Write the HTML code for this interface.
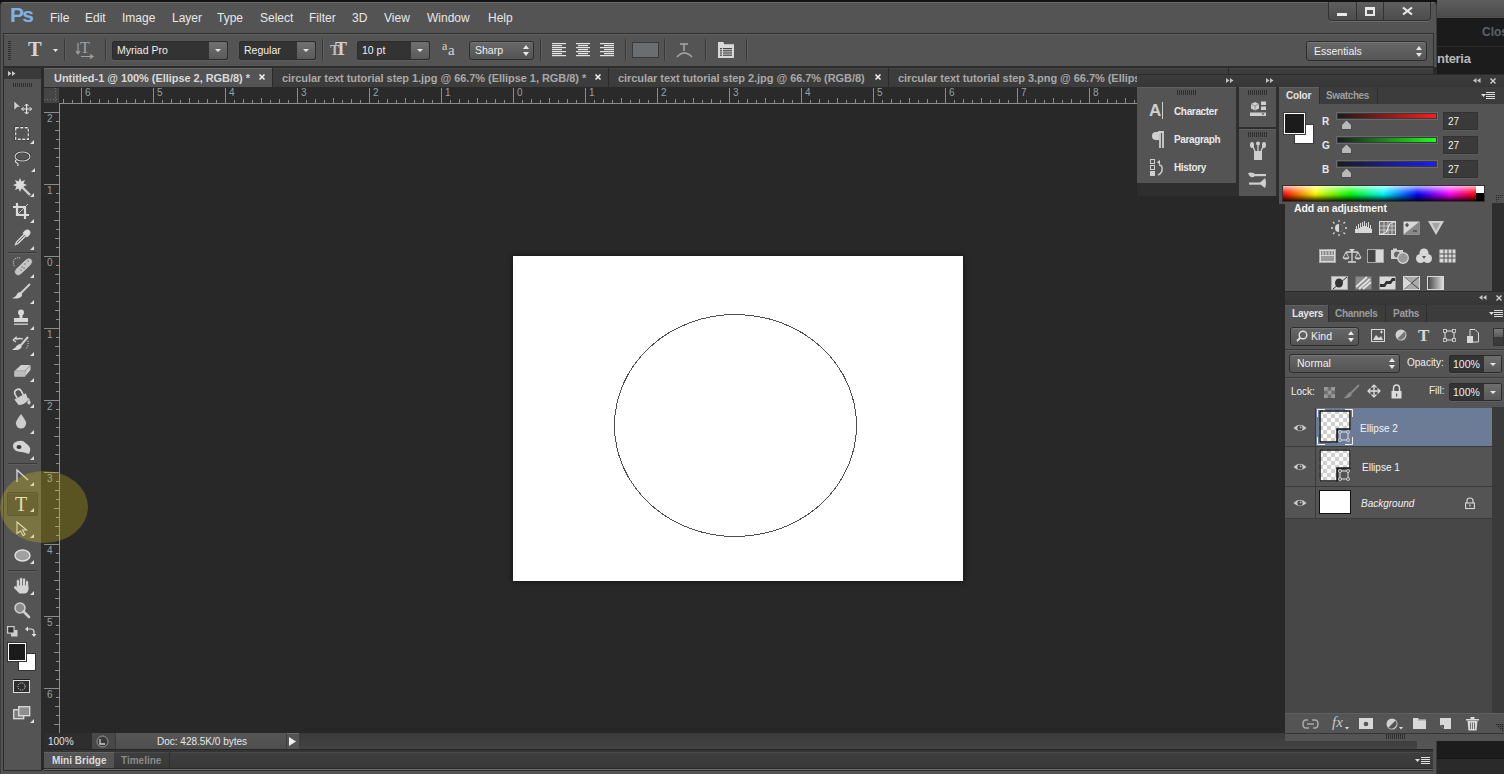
<!DOCTYPE html>
<html><head><meta charset="utf-8">
<style>
*{margin:0;padding:0;box-sizing:border-box}
html,body{width:1504px;height:774px;overflow:hidden;background:#191919;font-family:"Liberation Sans",sans-serif;}
.a{position:absolute}
.t{position:absolute;white-space:nowrap;line-height:1}
svg{overflow:visible}
.menu{font-size:12px;color:#e8e8e8}
.tab{font-size:11px;font-weight:bold;color:#a8a8a8}
.ui{font-size:10px;color:#e4e4e4}
</style></head><body>
<div class="a" style="left:1437px;top:0px;width:67px;height:18px;background:linear-gradient(#5e5e5e,#4a4a4a)"></div>
<div class="a" style="left:1437px;top:18px;width:67px;height:28px;background:#1b1b1b"></div>
<div class="a" style="left:1437px;top:46px;width:67px;height:712px;background:#1c1c1c;border-top:1px solid #2a2a2a"></div>
<div class="a" style="left:1437px;top:758px;width:67px;height:16px;background:#2a2a2a;border-top:1px solid #151515"></div>
<div class="t" style="left:1482px;top:26px;font-size:12px;font-weight:bold;color:#5c636b">Clos</div>
<div class="t" style="left:1437px;top:52px;font-size:13px;font-weight:bold;color:#b8b8b8;letter-spacing:-0.3px">nteria</div>
<div class="a" style="left:0px;top:0px;width:1437px;height:2px;background:#121212"></div>
<div class="a" style="left:0px;top:2px;width:1437px;height:772px;background:#545454;border-radius:4px 4px 0 0;border-top:1px solid #6a6a6a;border-left:1px solid #3c3c3c;border-right:1px solid #3c3c3c"></div>
<div class="t" style="left:10px;top:4px;font-size:21px;font-weight:bold;color:#7eb1e4;letter-spacing:-1.8px">Ps</div>
<div class="t" style="left:50px;top:12px;font-size:12px;color:#e8e8e8">File</div>
<div class="t" style="left:85px;top:12px;font-size:12px;color:#e8e8e8">Edit</div>
<div class="t" style="left:122px;top:12px;font-size:12px;color:#e8e8e8">Image</div>
<div class="t" style="left:172px;top:12px;font-size:12px;color:#e8e8e8">Layer</div>
<div class="t" style="left:217px;top:12px;font-size:12px;color:#e8e8e8">Type</div>
<div class="t" style="left:260px;top:12px;font-size:12px;color:#e8e8e8">Select</div>
<div class="t" style="left:309px;top:12px;font-size:12px;color:#e8e8e8">Filter</div>
<div class="t" style="left:352px;top:12px;font-size:12px;color:#e8e8e8">3D</div>
<div class="t" style="left:384px;top:12px;font-size:12px;color:#e8e8e8">View</div>
<div class="t" style="left:427px;top:12px;font-size:12px;color:#e8e8e8">Window</div>
<div class="t" style="left:488px;top:12px;font-size:12px;color:#e8e8e8">Help</div>
<div class="a" style="left:1328px;top:2px;width:103px;height:19px;background:linear-gradient(#5e5e5e,#4c4c4c);border:1px solid #333;border-top:none;border-radius:0 0 4px 4px;box-shadow:0 1px 0 #6a6a6a"></div>
<div class="a" style="left:1356px;top:2px;width:1px;height:18px;background:#333"></div>
<div class="a" style="left:1383px;top:2px;width:1px;height:18px;background:#333"></div>
<div class="a" style="left:1337px;top:13px;width:10px;height:3px;background:#e8e8e8"></div>
<div class="a" style="left:1365px;top:7px;width:10px;height:9px;border:2px solid #e8e8e8;border-top-width:3px"></div>
<svg class="a" style="left:1402px;top:7px;" width="11" height="8" viewBox="0 0 11 8"><path d="M1 0.5L10 7.5M10 0.5L1 7.5" stroke="#e8e8e8" stroke-width="2.2"/></svg>
<div class="a" style="left:3px;top:33px;width:1431px;height:34px;background:#545454;border:1px solid #2e2e2e;box-shadow:inset 0 1px 0 #626262"></div>
<svg class="a" style="left:8px;top:41px;" width="3" height="20" viewBox="0 0 3 20"><rect x="0" y="0" width="3" height="1" fill="#2e2e2e"/><rect x="0" y="2" width="3" height="1" fill="#2e2e2e"/><rect x="0" y="4" width="3" height="1" fill="#2e2e2e"/><rect x="0" y="6" width="3" height="1" fill="#2e2e2e"/><rect x="0" y="8" width="3" height="1" fill="#2e2e2e"/><rect x="0" y="10" width="3" height="1" fill="#2e2e2e"/><rect x="0" y="12" width="3" height="1" fill="#2e2e2e"/><rect x="0" y="14" width="3" height="1" fill="#2e2e2e"/><rect x="0" y="16" width="3" height="1" fill="#2e2e2e"/><rect x="0" y="18" width="3" height="1" fill="#2e2e2e"/></svg>
<div class="t" style="left:28px;top:39px;font-family:'Liberation Serif',serif;font-size:20.5px;font-weight:bold;color:#d6d6d6">T</div>
<svg class="a" style="left:53px;top:49px;" width="5" height="3" viewBox="0 0 5 3"><path d="M0 0H5L2.5 3Z" fill="#e8e8e8"/></svg>
<div class="a" style="left:64px;top:39px;width:1px;height:22px;background:#3a3a3a;box-shadow:1px 0 0 #5e5e5e"></div>
<div class="t" style="left:80px;top:40px;font-family:'Liberation Serif',serif;font-size:16px;color:#a0a0a0">T</div>
<svg class="a" style="left:76px;top:42px;" width="18" height="17" viewBox="0 0 18 17"><path d="M2 1V11M0 9L2 12L4 9" stroke="#a0a0a0" stroke-width="1.2" fill="none"/><path d="M5 14.5H16M14 12.5L17 14.5L14 16.5" stroke="#a0a0a0" stroke-width="1.2" fill="none"/></svg>
<div class="a" style="left:105px;top:39px;width:1px;height:22px;background:#3a3a3a;box-shadow:1px 0 0 #5e5e5e"></div>
<div class="a" style="left:112px;top:41px;width:116px;height:19px;background:#333;border:1px solid #2c2c2c;border-radius:2px;box-shadow:0 1px 0 #5e5e5e"></div>
<div class="a" style="left:209px;top:42px;width:18px;height:17px;background:linear-gradient(#707070,#5a5a5a);border-radius:0 2px 2px 0"></div>
<svg class="a" style="left:215px;top:49px;" width="6" height="3" viewBox="0 0 6 3"><path d="M0 0H6L3 3Z" fill="#e8e8e8"/></svg>
<div class="t" style="left:117px;top:45px;font-size:10.5px;color:#f0f0f0">Myriad Pro</div>
<div class="a" style="left:239px;top:41px;width:77px;height:19px;background:#333;border:1px solid #2c2c2c;border-radius:2px;box-shadow:0 1px 0 #5e5e5e"></div>
<div class="a" style="left:297px;top:42px;width:18px;height:17px;background:linear-gradient(#707070,#5a5a5a);border-radius:0 2px 2px 0"></div>
<svg class="a" style="left:303px;top:49px;" width="6" height="3" viewBox="0 0 6 3"><path d="M0 0H6L3 3Z" fill="#e8e8e8"/></svg>
<div class="t" style="left:244px;top:45px;font-size:10.5px;color:#f0f0f0">Regular</div>
<div class="a" style="left:322px;top:39px;width:1px;height:22px;background:#3a3a3a;box-shadow:1px 0 0 #5e5e5e"></div>
<div class="t" style="left:330px;top:44px;font-family:'Liberation Serif',serif;font-size:14px;font-weight:bold;color:#bdbdbd">T</div>
<div class="t" style="left:335px;top:40px;font-family:'Liberation Serif',serif;font-size:18px;font-weight:bold;color:#d0d0d0">T</div>
<div class="a" style="left:357px;top:41px;width:73px;height:19px;background:#333;border:1px solid #2c2c2c;border-radius:2px;box-shadow:0 1px 0 #5e5e5e"></div>
<div class="a" style="left:411px;top:42px;width:18px;height:17px;background:linear-gradient(#707070,#5a5a5a);border-radius:0 2px 2px 0"></div>
<svg class="a" style="left:417px;top:49px;" width="6" height="3" viewBox="0 0 6 3"><path d="M0 0H6L3 3Z" fill="#e8e8e8"/></svg>
<div class="t" style="left:362px;top:45px;font-size:10.5px;color:#f0f0f0">10 pt</div>
<div class="t" style="left:442px;top:40px;font-family:'Liberation Serif',serif;font-size:12px;color:#d8d8d8">a</div>
<div class="t" style="left:448px;top:43px;font-family:'Liberation Serif',serif;font-size:15px;color:#d8d8d8">a</div>
<div class="a" style="left:469px;top:41px;width:65px;height:19px;background:linear-gradient(#686868,#545454);border:1px solid #2e2e2e;border-radius:3px;box-shadow:inset 0 1px 0 #757575"></div>
<div class="t" style="left:475px;top:45px;font-size:10.5px;color:#f0f0f0">Sharp</div>
<svg class="a" style="left:523px;top:45px;" width="6" height="11" viewBox="0 0 6 11"><path d="M0 4L3 0L6 4ZM0 7L3 11L6 7Z" fill="#e8e8e8"/></svg>
<div class="a" style="left:540px;top:39px;width:1px;height:22px;background:#3a3a3a;box-shadow:1px 0 0 #5e5e5e"></div>
<svg class="a" style="left:552px;top:43px;" width="14" height="14" viewBox="0 0 14 14"><rect x="0" y="0" width="14" height="1.2" fill="#e4e4e4"/><rect x="0" y="2" width="10" height="1.2" fill="#e4e4e4"/><rect x="0" y="4" width="14" height="1.2" fill="#e4e4e4"/><rect x="0" y="6" width="10" height="1.2" fill="#e4e4e4"/><rect x="0" y="8" width="14" height="1.2" fill="#e4e4e4"/><rect x="0" y="10" width="10" height="1.2" fill="#e4e4e4"/><rect x="0" y="12" width="14" height="1.2" fill="#e4e4e4"/></svg>
<svg class="a" style="left:576px;top:43px;" width="14" height="14" viewBox="0 0 14 14"><rect x="0.0" y="0" width="14" height="1.2" fill="#e4e4e4"/><rect x="2.0" y="2" width="10" height="1.2" fill="#e4e4e4"/><rect x="0.0" y="4" width="14" height="1.2" fill="#e4e4e4"/><rect x="2.0" y="6" width="10" height="1.2" fill="#e4e4e4"/><rect x="0.0" y="8" width="14" height="1.2" fill="#e4e4e4"/><rect x="2.0" y="10" width="10" height="1.2" fill="#e4e4e4"/><rect x="0.0" y="12" width="14" height="1.2" fill="#e4e4e4"/></svg>
<svg class="a" style="left:600px;top:43px;" width="14" height="14" viewBox="0 0 14 14"><rect x="0" y="0" width="14" height="1.2" fill="#e4e4e4"/><rect x="4" y="2" width="10" height="1.2" fill="#e4e4e4"/><rect x="0" y="4" width="14" height="1.2" fill="#e4e4e4"/><rect x="4" y="6" width="10" height="1.2" fill="#e4e4e4"/><rect x="0" y="8" width="14" height="1.2" fill="#e4e4e4"/><rect x="4" y="10" width="10" height="1.2" fill="#e4e4e4"/><rect x="0" y="12" width="14" height="1.2" fill="#e4e4e4"/></svg>
<div class="a" style="left:625px;top:39px;width:1px;height:22px;background:#3a3a3a;box-shadow:1px 0 0 #5e5e5e"></div>
<div class="a" style="left:632px;top:42px;width:27px;height:16px;background:#6a6e70;border:1px solid #3a3a3a"></div>
<div class="a" style="left:664px;top:39px;width:1px;height:22px;background:#3a3a3a;box-shadow:1px 0 0 #5e5e5e"></div>
<svg class="a" style="left:676px;top:42px;" width="17" height="17" viewBox="0 0 17 17"><path d="M4 2H12M8 2V9M1 15Q8 7 16 15" stroke="#a8a8a8" stroke-width="1.5" fill="none"/></svg>
<div class="a" style="left:705px;top:39px;width:1px;height:22px;background:#3a3a3a;box-shadow:1px 0 0 #5e5e5e"></div>
<svg class="a" style="left:718px;top:42px;" width="16" height="16" viewBox="0 0 16 16"><path d="M0 0H5L7 2H16V16H0Z" fill="#d8d8d8"/><rect x="6" y="1" width="10" height="1.2" fill="#555"/><rect x="2" y="6.0" width="2" height="1.2" fill="#444"/><rect x="5" y="6.0" width="9" height="1.2" fill="#444"/><rect x="2" y="8.2" width="2" height="1.2" fill="#444"/><rect x="5" y="8.2" width="9" height="1.2" fill="#444"/><rect x="2" y="10.4" width="2" height="1.2" fill="#444"/><rect x="5" y="10.4" width="9" height="1.2" fill="#444"/><rect x="2" y="12.600000000000001" width="2" height="1.2" fill="#444"/><rect x="5" y="12.600000000000001" width="9" height="1.2" fill="#444"/></svg>
<div class="a" style="left:746px;top:39px;width:1px;height:22px;background:#3a3a3a;box-shadow:1px 0 0 #5e5e5e"></div>
<div class="a" style="left:1306px;top:41px;width:121px;height:20px;background:linear-gradient(#686868,#555);border:1px solid #2e2e2e;border-radius:3px;box-shadow:inset 0 1px 0 #777"></div>
<div class="t" style="left:1314px;top:46px;font-size:10.5px;color:#f0f0f0">Essentials</div>
<svg class="a" style="left:1416px;top:46px;" width="6" height="11" viewBox="0 0 6 11"><path d="M0 4L3 0L6 4ZM0 7L3 11L6 7Z" fill="#e8e8e8"/></svg>
<div class="a" style="left:1px;top:67px;width:1436px;height:707px;background:#545454"></div>
<div class="a" style="left:41px;top:67px;width:1396px;height:703px;background:#2a2a2a"></div>
<div class="a" style="left:3px;top:67px;width:39px;height:704px;background:#545454;border:1px solid #2a2a2a;border-top:none"></div>
<div class="a" style="left:4px;top:67px;width:37px;height:12px;background:#393939;border-top:1px solid #2a2a2a"></div>
<svg class="a" style="left:8px;top:71px;" width="8" height="5" viewBox="0 0 8 5"><path d="M0 0L3.5 2.5L0 5ZM4 0L7.5 2.5L4 5Z" fill="#c8c8c8"/></svg>
<svg class="a" style="left:13px;top:83px;" width="20" height="4" viewBox="0 0 20 4"><rect x="0" y="0" width="1" height="4" fill="#2e2e2e"/><rect x="2" y="0" width="1" height="4" fill="#2e2e2e"/><rect x="4" y="0" width="1" height="4" fill="#2e2e2e"/><rect x="6" y="0" width="1" height="4" fill="#2e2e2e"/><rect x="8" y="0" width="1" height="4" fill="#2e2e2e"/><rect x="10" y="0" width="1" height="4" fill="#2e2e2e"/><rect x="12" y="0" width="1" height="4" fill="#2e2e2e"/><rect x="14" y="0" width="1" height="4" fill="#2e2e2e"/><rect x="16" y="0" width="1" height="4" fill="#2e2e2e"/><rect x="18" y="0" width="1" height="4" fill="#2e2e2e"/></svg>
<div class="a" style="left:44px;top:68px;width:1389px;height:19px;background:#3c3c3c;border-top:1px solid #464646"></div>
<div class="a" style="left:1228px;top:68px;width:1px;height:19px;background:#2a2a2a"></div>
<div class="a" style="left:44px;top:68px;width:228px;height:19px;background:#545454;border-top:1px solid #6a6a6a"></div>
<div class="a" style="left:272px;top:68px;width:1px;height:19px;background:#2a2a2a"></div>
<div class="a" style="left:608px;top:68px;width:1px;height:19px;background:#2a2a2a"></div>
<div class="a" style="left:888px;top:68px;width:1px;height:19px;background:#2a2a2a"></div>
<div class="t" style="left:54px;top:73px;font-size:11px;font-weight:bold;color:#dadada;letter-spacing:-0.05px">Untitled-1 @ 100% (Ellipse 2, RGB/8) *</div>
<div class="t" style="left:282px;top:73px;font-size:11px;font-weight:bold;color:#a8a8a8;letter-spacing:-0.05px">circular text tutorial step 1.jpg @ 66.7% (Ellipse 1, RGB/8) *</div>
<div class="t" style="left:618px;top:73px;font-size:11px;font-weight:bold;color:#a8a8a8;letter-spacing:-0.05px">circular text tutorial step 2.jpg @ 66.7% (RGB/8)</div>
<div class="t" style="left:898px;top:73px;font-size:11px;font-weight:bold;color:#a8a8a8;letter-spacing:-0.05px">circular text tutorial step 3.png @ 66.7% (Ellipse 1, RGB/8)</div>
<svg class="a" style="left:259px;top:74px;" width="6" height="6" viewBox="0 0 6 6"><path d="M0.5 0.5L5.5 5.5M5.5 0.5L0.5 5.5" stroke="#f0f0f0" stroke-width="1.6"/></svg>
<svg class="a" style="left:595px;top:74px;" width="6" height="6" viewBox="0 0 6 6"><path d="M0.5 0.5L5.5 5.5M5.5 0.5L0.5 5.5" stroke="#f0f0f0" stroke-width="1.6"/></svg>
<svg class="a" style="left:875px;top:74px;" width="6" height="6" viewBox="0 0 6 6"><path d="M0.5 0.5L5.5 5.5M5.5 0.5L0.5 5.5" stroke="#f0f0f0" stroke-width="1.6"/></svg>
<div class="a" style="left:44px;top:87px;width:1093px;height:16px;background:#2a2a2a"></div>
<div class="a" style="left:44px;top:103px;width:15px;height:630px;background:#2a2a2a"></div>
<div class="a" style="left:44px;top:88px;width:15px;height:15px;background:#454545"></div>
<svg class="a" style="left:44px;top:88px;" width="15" height="15" viewBox="0 0 15 15"><path d="M11.5 0V15M0 11.5H15" stroke="#6e6e6e" stroke-width="1" stroke-dasharray="1 2"/></svg>
<svg class="a" style="left:59px;top:87px;" width="1078" height="17" viewBox="0 0 1078 17"><path d="M4.5 12.0V16 M13.5 13.0V16 M22.5 1.0V16 M31.5 13.0V16 M40.5 12.0V16 M49.5 13.0V16 M58.5 11.0V16 M67.5 13.0V16 M76.5 12.0V16 M85.5 13.0V16 M94.5 1.0V16 M103.5 13.0V16 M112.5 12.0V16 M121.5 13.0V16 M130.5 11.0V16 M139.5 13.0V16 M148.5 12.0V16 M157.5 13.0V16 M166.5 1.0V16 M175.5 13.0V16 M184.5 12.0V16 M193.5 13.0V16 M202.5 11.0V16 M211.5 13.0V16 M220.5 12.0V16 M229.5 13.0V16 M238.5 1.0V16 M247.5 13.0V16 M256.5 12.0V16 M265.5 13.0V16 M274.5 11.0V16 M283.5 13.0V16 M292.5 12.0V16 M301.5 13.0V16 M310.5 1.0V16 M319.5 13.0V16 M328.5 12.0V16 M337.5 13.0V16 M346.5 11.0V16 M355.5 13.0V16 M364.5 12.0V16 M373.5 13.0V16 M382.5 1.0V16 M391.5 13.0V16 M400.5 12.0V16 M409.5 13.0V16 M418.5 11.0V16 M427.5 13.0V16 M436.5 12.0V16 M445.5 13.0V16 M454.5 1.0V16 M463.5 13.0V16 M472.5 12.0V16 M481.5 13.0V16 M490.5 11.0V16 M499.5 13.0V16 M508.5 12.0V16 M517.5 13.0V16 M526.5 1.0V16 M535.5 13.0V16 M544.5 12.0V16 M553.5 13.0V16 M562.5 11.0V16 M571.5 13.0V16 M580.5 12.0V16 M589.5 13.0V16 M598.5 1.0V16 M607.5 13.0V16 M616.5 12.0V16 M625.5 13.0V16 M634.5 11.0V16 M643.5 13.0V16 M652.5 12.0V16 M661.5 13.0V16 M670.5 1.0V16 M679.5 13.0V16 M688.5 12.0V16 M697.5 13.0V16 M706.5 11.0V16 M715.5 13.0V16 M724.5 12.0V16 M733.5 13.0V16 M742.5 1.0V16 M751.5 13.0V16 M760.5 12.0V16 M769.5 13.0V16 M778.5 11.0V16 M787.5 13.0V16 M796.5 12.0V16 M805.5 13.0V16 M814.5 1.0V16 M823.5 13.0V16 M832.5 12.0V16 M841.5 13.0V16 M850.5 11.0V16 M859.5 13.0V16 M868.5 12.0V16 M877.5 13.0V16 M886.5 1.0V16 M895.5 13.0V16 M904.5 12.0V16 M913.5 13.0V16 M922.5 11.0V16 M931.5 13.0V16 M940.5 12.0V16 M949.5 13.0V16 M958.5 1.0V16 M967.5 13.0V16 M976.5 12.0V16 M985.5 13.0V16 M994.5 11.0V16 M1003.5 13.0V16 M1012.5 12.0V16 M1021.5 13.0V16 M1030.5 1.0V16 M1039.5 13.0V16 M1048.5 12.0V16 M1057.5 13.0V16 M1066.5 11.0V16 M1075.5 13.0V16" stroke="#8c8c8c" stroke-width="1"/><rect x="0" y="16" width="1078" height="1" fill="#8c8c8c"/></svg>
<div class="t" style="left:85px;top:88px;font-size:10px;color:#96a0aa">6</div>
<div class="t" style="left:157px;top:88px;font-size:10px;color:#96a0aa">5</div>
<div class="t" style="left:229px;top:88px;font-size:10px;color:#96a0aa">4</div>
<div class="t" style="left:301px;top:88px;font-size:10px;color:#96a0aa">3</div>
<div class="t" style="left:373px;top:88px;font-size:10px;color:#96a0aa">2</div>
<div class="t" style="left:445px;top:88px;font-size:10px;color:#96a0aa">1</div>
<div class="t" style="left:517px;top:88px;font-size:10px;color:#96a0aa">0</div>
<div class="t" style="left:589px;top:88px;font-size:10px;color:#96a0aa">1</div>
<div class="t" style="left:661px;top:88px;font-size:10px;color:#96a0aa">2</div>
<div class="t" style="left:733px;top:88px;font-size:10px;color:#96a0aa">3</div>
<div class="t" style="left:805px;top:88px;font-size:10px;color:#96a0aa">4</div>
<div class="t" style="left:877px;top:88px;font-size:10px;color:#96a0aa">5</div>
<div class="t" style="left:949px;top:88px;font-size:10px;color:#96a0aa">6</div>
<div class="t" style="left:1021px;top:88px;font-size:10px;color:#96a0aa">7</div>
<div class="t" style="left:1093px;top:88px;font-size:10px;color:#96a0aa">8</div>
<div class="t" style="left:47px;top:114px;font-size:10px;color:#96a0aa">2</div>
<div class="t" style="left:47px;top:186px;font-size:10px;color:#96a0aa">1</div>
<div class="t" style="left:47px;top:258px;font-size:10px;color:#96a0aa">0</div>
<div class="t" style="left:47px;top:330px;font-size:10px;color:#96a0aa">1</div>
<div class="t" style="left:47px;top:402px;font-size:10px;color:#96a0aa">2</div>
<div class="t" style="left:47px;top:474px;font-size:10px;color:#96a0aa">3</div>
<div class="t" style="left:47px;top:546px;font-size:10px;color:#96a0aa">4</div>
<div class="t" style="left:47px;top:618px;font-size:10px;color:#96a0aa">5</div>
<div class="t" style="left:47px;top:690px;font-size:10px;color:#96a0aa">6</div>
<svg class="a" style="left:44px;top:103px;" width="16" height="630" viewBox="0 0 16 630"><path d="M0 9.5H15 M12 18.5H15 M11 27.5H15 M12 36.5H15 M10 45.5H15 M12 54.5H15 M11 63.5H15 M12 72.5H15 M0 81.5H15 M12 90.5H15 M11 99.5H15 M12 108.5H15 M10 117.5H15 M12 126.5H15 M11 135.5H15 M12 144.5H15 M0 153.5H15 M12 162.5H15 M11 171.5H15 M12 180.5H15 M10 189.5H15 M12 198.5H15 M11 207.5H15 M12 216.5H15 M0 225.5H15 M12 234.5H15 M11 243.5H15 M12 252.5H15 M10 261.5H15 M12 270.5H15 M11 279.5H15 M12 288.5H15 M0 297.5H15 M12 306.5H15 M11 315.5H15 M12 324.5H15 M10 333.5H15 M12 342.5H15 M11 351.5H15 M12 360.5H15 M0 369.5H15 M12 378.5H15 M11 387.5H15 M12 396.5H15 M10 405.5H15 M12 414.5H15 M11 423.5H15 M12 432.5H15 M0 441.5H15 M12 450.5H15 M11 459.5H15 M12 468.5H15 M10 477.5H15 M12 486.5H15 M11 495.5H15 M12 504.5H15 M0 513.5H15 M12 522.5H15 M11 531.5H15 M12 540.5H15 M10 549.5H15 M12 558.5H15 M11 567.5H15 M12 576.5H15 M0 585.5H15 M12 594.5H15 M11 603.5H15 M12 612.5H15 M10 621.5H15 M12 630.5H15" stroke="#8c8c8c" stroke-width="1"/><rect x="15" y="0" width="1" height="630" fill="#8c8c8c"/></svg>
<div class="a" style="left:60px;top:104px;width:1225px;height:629px;background:#282828"></div>
<div class="a" style="left:513px;top:256px;width:450px;height:325px;background:#fff;box-shadow:0 0 5px 1px rgba(0,0,0,.45)"></div>
<svg class="a" style="left:513px;top:256px;" width="450" height="325" viewBox="0 0 450 325"><ellipse cx="222.5" cy="169.5" rx="121" ry="111" fill="none" stroke="#4e4e4e" stroke-width="1" shape-rendering="crispEdges"/></svg>
<div class="a" style="left:44px;top:733px;width:1241px;height:17px;background:linear-gradient(#3a3a3a,#444)"></div>
<div class="a" style="left:44px;top:733px;width:48px;height:17px;background:#2e2e2e"></div>
<div class="t" style="left:48px;top:737px;font-size:10px;color:#e0e0e0">100%</div>
<div class="a" style="left:92px;top:733px;width:23px;height:17px;background:#484848"></div>
<svg class="a" style="left:96px;top:735px;" width="13" height="13" viewBox="0 0 13 13"><circle cx="6.5" cy="6.5" r="5.5" fill="#3a3a3a" stroke="#9a9a9a" stroke-width="1"/><path d="M4 4V9H9" stroke="#d0d0d0" stroke-width="1.3" fill="none"/></svg>
<div class="a" style="left:115px;top:733px;width:171px;height:16px;background:linear-gradient(#565656,#4e4e4e);border-left:1px solid #3a3a3a"></div>
<div class="t" style="left:157px;top:737px;font-size:10px;color:#e8e8e8">Doc: 428.5K/0 bytes</div>
<div class="a" style="left:286px;top:733px;width:13px;height:16px;background:#545454;border-top:1px solid #6a6a6a;border-left:1px solid #3a3a3a"></div>
<svg class="a" style="left:289px;top:737px;" width="7" height="9" viewBox="0 0 7 9"><path d="M0 0L7 4.5L0 9Z" fill="#f0f0f0"/></svg>
<div class="a" style="left:44px;top:749px;width:1393px;height:1px;background:#262626"></div>
<div class="a" style="left:44px;top:750px;width:1393px;height:2px;background:#343434"></div>
<div class="a" style="left:44px;top:752px;width:1389px;height:17px;background:linear-gradient(#3e3e3e,#383838);border-top:1px solid #4a4a4a"></div>
<div class="a" style="left:44px;top:752px;width:70px;height:17px;background:#545454;border-top:1px solid #646464"></div>
<div class="t" style="left:52px;top:756px;font-size:10px;font-weight:bold;color:#dcdcdc">Mini Bridge</div>
<div class="t" style="left:121px;top:756px;font-size:10px;font-weight:bold;color:#8a8a8a">Timeline</div>
<div class="a" style="left:169px;top:752px;width:1px;height:17px;background:#2e2e2e"></div>
<div class="a" style="left:44px;top:768px;width:1393px;height:1px;background:#2a2a2a"></div>
<div class="a" style="left:44px;top:769px;width:1393px;height:1px;background:#6a6a6a"></div>
<div class="a" style="left:44px;top:770px;width:1393px;height:1px;background:#2a2a2a"></div>
<svg class="a" style="left:1415px;top:757px;" width="15" height="8" viewBox="0 0 15 8"><path d="M0 2H5L2.5 5Z" fill="#e0e0e0"/><rect x="6" y="0" width="9" height="1" fill="#e0e0e0"/><rect x="6" y="2" width="9" height="1" fill="#e0e0e0"/><rect x="6" y="4" width="9" height="1" fill="#e0e0e0"/><rect x="6" y="6" width="9" height="1" fill="#e0e0e0"/></svg>
<svg class="a" style="left:12px;top:99px;" width="24" height="14" viewBox="0 0 24 14"><path d="M1.7 1.5L9 8.3H5.2L2 11.8Z" fill="#cfcfcf" stroke="#2a2a2a" stroke-width="0.6"/><path d="M14.6 5V15M9.6 10H19.6" stroke="#e6e6e6" stroke-width="1.2"/><path d="M12.6 7L14.6 5L16.6 7M12.6 13L14.6 15L16.6 13M11.6 8L9.6 10L11.6 12M17.6 8L19.6 10L17.6 12" stroke="#e6e6e6" stroke-width="1" fill="none"/></svg>
<svg class="a" style="left:15px;top:127px;" width="14" height="13" viewBox="0 0 14 13"><rect x="0.75" y="0.75" width="12.5" height="11.5" fill="none" stroke="#2a2a2a" stroke-width="2.4" stroke-dasharray="3 1.5"/><rect x="0.75" y="0.75" width="12.5" height="11.5" fill="none" stroke="#e8e8e8" stroke-width="1.3" stroke-dasharray="3 1.5"/></svg>
<svg class="a" style="left:30px;top:140px;" width="4" height="4" viewBox="0 0 4 4"><path d="M4 0V4H0Z" fill="#e0e0e0"/></svg>
<svg class="a" style="left:13px;top:151px;" width="18" height="16" viewBox="0 0 18 16"><ellipse cx="9.5" cy="5.5" rx="7.5" ry="4.5" fill="none" stroke="#2a2a2a" stroke-width="2.2"/><ellipse cx="9.5" cy="5.5" rx="7.5" ry="4.5" fill="none" stroke="#dcdcdc" stroke-width="1.1"/><path d="M3.5 8.5Q1 11 4 12Q6 13 4.5 15" stroke="#dcdcdc" stroke-width="1.1" fill="none"/></svg>
<svg class="a" style="left:31px;top:168px;" width="4" height="4" viewBox="0 0 4 4"><path d="M4 0V4H0Z" fill="#e0e0e0"/></svg>
<svg class="a" style="left:13px;top:177px;" width="20" height="20" viewBox="0 0 20 20"><path d="M7 1L8.5 4.5L12 3L10.5 6.5L14 8L10.5 9.5L12 13L8.5 11.5L7 15L5.5 11.5L2 13L3.5 9.5L0 8L3.5 6.5L2 3L5.5 4.5Z" fill="#dcdcdc"/><path d="M9 10L17 18" stroke="#d0d0d0" stroke-width="2.4"/></svg>
<svg class="a" style="left:30px;top:193px;" width="4" height="4" viewBox="0 0 4 4"><path d="M4 0V4H0Z" fill="#e0e0e0"/></svg>
<svg class="a" style="left:13px;top:203px;" width="17" height="16" viewBox="0 0 17 16"><path d="M4 0V12H16M0 4H12V16" stroke="#dcdcdc" stroke-width="2.2" fill="none"/><path d="M5 11L15 1" stroke="#cfcfcf" stroke-width="0.9"/></svg>
<svg class="a" style="left:30px;top:219px;" width="4" height="4" viewBox="0 0 4 4"><path d="M4 0V4H0Z" fill="#e0e0e0"/></svg>
<svg class="a" style="left:14px;top:229px;" width="17" height="17" viewBox="0 0 17 17"><path d="M11 1.5Q13.5 -0.5 15.5 1.5Q17.5 3.5 15.5 6L13 8.5L8.5 4Z" fill="#dcdcdc"/><path d="M10 5.5L2.5 13L1.5 15.5L4 14.5L11.5 7" fill="none" stroke="#dcdcdc" stroke-width="1.3"/></svg>
<svg class="a" style="left:30px;top:246px;" width="4" height="4" viewBox="0 0 4 4"><path d="M4 0V4H0Z" fill="#e0e0e0"/></svg>
<div class="a" style="left:8px;top:252px;width:29px;height:1px;background:#3a3a3a;box-shadow:0 1px 0 #5e5e5e"></div>
<svg class="a" style="left:12px;top:257px;" width="22" height="18" viewBox="0 0 22 18"><path d="M8 1Q3 0 1.5 4Q1 8 3 10" stroke="#e0e0e0" stroke-width="1" stroke-dasharray="1 1" fill="none"/><path d="M3.5 12L13.5 2.5Q17 -0.5 19.5 2Q22 4.5 19 8L9 17.5Q6 20 3.5 17.5Q1 15 3.5 12Z" fill="#c4c4c4" stroke="#2e2e2e" stroke-width="0.6"/><circle cx="10" cy="10" r="0.7" fill="#666"/><circle cx="13" cy="7" r="0.7" fill="#666"/><circle cx="16" cy="4" r="0.7" fill="#666"/><circle cx="12" cy="11" r="0.7" fill="#666"/><circle cx="9" cy="13" r="0.7" fill="#666"/></svg>
<svg class="a" style="left:30px;top:274px;" width="4" height="4" viewBox="0 0 4 4"><path d="M4 0V4H0Z" fill="#e0e0e0"/></svg>
<svg class="a" style="left:12px;top:283px;" width="19" height="16" viewBox="0 0 19 16"><path d="M18 1L9 10" stroke="#d0d0d0" stroke-width="2"/><path d="M9 9Q12 13 7 15Q3 16 0 15Q4 14 5 11Q6 9 9 9Z" fill="#d8d8d8"/></svg>
<svg class="a" style="left:30px;top:300px;" width="4" height="4" viewBox="0 0 4 4"><path d="M4 0V4H0Z" fill="#e0e0e0"/></svg>
<svg class="a" style="left:13px;top:309px;" width="17" height="17" viewBox="0 0 17 17"><circle cx="8" cy="3.5" r="3" fill="#d8d8d8"/><path d="M6.5 5H9.5V9H6.5Z" fill="#d8d8d8"/><path d="M1 9H15V13H1Z" fill="#d8d8d8"/><rect x="1" y="14.5" width="14" height="1.3" fill="#d8d8d8"/></svg>
<svg class="a" style="left:30px;top:326px;" width="4" height="4" viewBox="0 0 4 4"><path d="M4 0V4H0Z" fill="#e0e0e0"/></svg>
<svg class="a" style="left:12px;top:336px;" width="19" height="15" viewBox="0 0 19 15"><path d="M1 4L4 1.5V3Q8 2 11 3" stroke="#d8d8d8" stroke-width="1.3" fill="none"/><path d="M1 4L4 6" stroke="#d8d8d8" stroke-width="1.3"/><path d="M16 1L9 9" stroke="#d0d0d0" stroke-width="2"/><path d="M9 8Q11 12 7 13.5Q3 14.5 0 13.5Q3.5 12.5 4.5 10Q6 8 9 8Z" fill="#d8d8d8"/><path d="M16 5Q17 9 14 13" stroke="#e0e0e0" stroke-width="1" stroke-dasharray="1 1" fill="none"/></svg>
<svg class="a" style="left:30px;top:352px;" width="4" height="4" viewBox="0 0 4 4"><path d="M4 0V4H0Z" fill="#e0e0e0"/></svg>
<svg class="a" style="left:14px;top:363px;" width="17" height="15" viewBox="0 0 17 15"><path d="M0.5 8L7 2H16.5V7L11 13.5H0.5Z" fill="#d0d0d0"/><path d="M0.5 8H11V13.5M11 8L16.5 2" stroke="#8a8a8a" stroke-width="0.9" fill="none"/><rect x="0.5" y="8.5" width="10.5" height="5" fill="#bdbdbd"/></svg>
<svg class="a" style="left:30px;top:378px;" width="4" height="4" viewBox="0 0 4 4"><path d="M4 0V4H0Z" fill="#e0e0e0"/></svg>
<svg class="a" style="left:12px;top:387px;" width="19" height="19" viewBox="0 0 19 19"><g transform="rotate(-28 9 10)"><path d="M5 9V5Q5 1.5 8.5 1.5Q12 1.5 12 5V11" stroke="#d8d8d8" stroke-width="1.6" fill="none"/><path d="M2 9H15L14 16Q8.5 18.5 3 16Z" fill="#cfcfcf"/></g><path d="M15.5 11Q17.5 12 17 14" stroke="#d0d0d0" stroke-width="1.3" fill="none"/><ellipse cx="17" cy="15.5" rx="1.6" ry="2" fill="#d0d0d0"/></svg>
<svg class="a" style="left:30px;top:404px;" width="4" height="4" viewBox="0 0 4 4"><path d="M4 0V4H0Z" fill="#e0e0e0"/></svg>
<svg class="a" style="left:15px;top:414px;" width="12" height="15" viewBox="0 0 12 15"><path d="M6 0Q12 8 11 10Q10 14.5 6 14.5Q2 14.5 1 10Q0 8 6 0Z" fill="#cdcdcd"/></svg>
<svg class="a" style="left:30px;top:430px;" width="4" height="4" viewBox="0 0 4 4"><path d="M4 0V4H0Z" fill="#e0e0e0"/></svg>
<svg class="a" style="left:12px;top:440px;" width="19" height="16" viewBox="0 0 19 16"><path d="M2 3Q6 0 11 1L16 5Q19 8 18 11L17 14L14 13L10 12Q4 12 2 9Q0 6 2 3Z" fill="#d4d4d4"/><ellipse cx="7" cy="7" rx="2.5" ry="2" fill="#3a3a3a"/></svg>
<svg class="a" style="left:30px;top:456px;" width="4" height="4" viewBox="0 0 4 4"><path d="M4 0V4H0Z" fill="#e0e0e0"/></svg>
<div class="a" style="left:8px;top:463px;width:29px;height:1px;background:#3a3a3a;box-shadow:0 1px 0 #5e5e5e"></div>
<svg class="a" style="left:16px;top:469px;" width="14" height="14" viewBox="0 0 14 14"><path d="M1 13V1L12 11" stroke="#dcdcdc" stroke-width="1.3" fill="none"/></svg>
<svg class="a" style="left:30px;top:482px;" width="4" height="4" viewBox="0 0 4 4"><path d="M4 0V4H0Z" fill="#e0e0e0"/></svg>
<div class="a" style="left:7px;top:492px;width:31px;height:24px;background:#404040;border:1px solid #363636;border-radius:2px;box-shadow:inset 0 1px 0 #4a4a4a"></div>
<div class="t" style="left:15px;top:494px;font-family:'Liberation Serif',serif;font-size:20px;color:#e4e4e4">T</div>
<svg class="a" style="left:30px;top:508px;" width="4" height="4" viewBox="0 0 4 4"><path d="M4 0V4H0Z" fill="#e0e0e0"/></svg>
<svg class="a" style="left:16px;top:521px;" width="12" height="15" viewBox="0 0 12 15"><path d="M1 1L10.5 9H6.5L9 13.5L7 14.5L4.5 10L1 12.5Z" fill="none" stroke="#e0e0e0" stroke-width="1.1"/></svg>
<svg class="a" style="left:30px;top:534px;" width="4" height="4" viewBox="0 0 4 4"><path d="M4 0V4H0Z" fill="#e0e0e0"/></svg>
<svg class="a" style="left:14px;top:549px;" width="17" height="13" viewBox="0 0 17 13"><ellipse cx="8.5" cy="6.5" rx="7.5" ry="5.5" fill="#a0a0a0" stroke="#e0e0e0" stroke-width="1.4"/></svg>
<svg class="a" style="left:30px;top:560px;" width="4" height="4" viewBox="0 0 4 4"><path d="M4 0V4H0Z" fill="#e0e0e0"/></svg>
<div class="a" style="left:8px;top:570px;width:29px;height:1px;background:#3a3a3a;box-shadow:0 1px 0 #5e5e5e"></div>
<svg class="a" style="left:13px;top:577px;" width="17" height="17" viewBox="0 0 17 17"><path d="M3.5 9H15.5V12Q15 16 12 16.5H6.5L1 11Q0.5 9.5 2 9.3Z" fill="#d4d4d4"/><rect x="3.5" y="2.5" width="3" height="8.5" rx="1.5" fill="#d4d4d4" stroke="#545454" stroke-width="0.6"/><rect x="6.5" y="0.5" width="3" height="10.5" rx="1.5" fill="#d4d4d4" stroke="#545454" stroke-width="0.6"/><rect x="9.5" y="1" width="3" height="10" rx="1.5" fill="#d4d4d4" stroke="#545454" stroke-width="0.6"/><rect x="12.5" y="3.5" width="3" height="7.5" rx="1.5" fill="#d4d4d4" stroke="#545454" stroke-width="0.6"/><rect x="3.8" y="8.5" width="11.4" height="4" fill="#d4d4d4"/></svg>
<svg class="a" style="left:30px;top:591px;" width="4" height="4" viewBox="0 0 4 4"><path d="M4 0V4H0Z" fill="#e0e0e0"/></svg>
<svg class="a" style="left:14px;top:602px;" width="16" height="17" viewBox="0 0 16 17"><circle cx="6" cy="6" r="5" fill="#8a8a8a" stroke="#cfcfcf" stroke-width="1.6"/><path d="M9.5 9.5L15 15" stroke="#cfcfcf" stroke-width="2.6" stroke-linecap="round"/></svg>
<svg class="a" style="left:7px;top:626px;" width="11" height="11" viewBox="0 0 11 11"><rect x="4" y="4" width="6.5" height="6.5" fill="#cfcfcf"/><rect x="0.6" y="0.6" width="6.5" height="6.5" fill="#333" stroke="#cfcfcf" stroke-width="1.2"/></svg>
<svg class="a" style="left:25px;top:626px;" width="11" height="11" viewBox="0 0 11 11"><path d="M2 3H6Q9 3 9 6V9" stroke="#e0e0e0" stroke-width="1.2" fill="none"/><path d="M0 3L3 0.5V5.5Z M9 11L6.5 8H11.5Z" fill="#e0e0e0"/></svg>
<div class="a" style="left:18px;top:653px;width:18px;height:18px;background:#fff;border:1px solid #333"></div>
<div class="a" style="left:8px;top:643px;width:18px;height:18px;background:#1b1b1b;border:1px solid #fff;box-shadow:0 0 0 1px #333"></div>
<div class="a" style="left:13px;top:680px;width:17px;height:13px;background:#2e2e2e;border:1px solid #dcdcdc;box-shadow:0 -1px 0 #222"></div>
<svg class="a" style="left:16px;top:682px;" width="11" height="9" viewBox="0 0 11 9"><ellipse cx="5.5" cy="4.5" rx="3.6" ry="3.6" fill="none" stroke="#e8e8e8" stroke-width="1" stroke-dasharray="1 1.1"/></svg>
<svg class="a" style="left:13px;top:706px;" width="18" height="16" viewBox="0 0 18 16"><rect x="0.7" y="3.7" width="10" height="9" fill="#7c7c7c" stroke="#dcdcdc" stroke-width="1.3"/><rect x="5.7" y="0.7" width="11" height="9" fill="#8e8e8e" stroke="#dcdcdc" stroke-width="1.3"/></svg>
<svg class="a" style="left:30px;top:719px;" width="4" height="4" viewBox="0 0 4 4"><path d="M4 0V4H0Z" fill="#e0e0e0"/></svg>
<div class="a" style="left:0px;top:471px;width:88px;height:72px;border-radius:50%;background:rgba(222,205,20,0.27)"></div>
<div class="a" style="left:1137px;top:74px;width:300px;height:13px;background:linear-gradient(#3c3c3c,#363636);border-top:1px solid #2a2a2a;border-radius:3px 0 0 0"></div>
<svg class="a" style="left:1226px;top:78px;" width="8" height="5" viewBox="0 0 8 5"><path d="M0 0L3.5 2.5L0 5ZM4 0L7.5 2.5L4 5Z" fill="#c0c0c0"/></svg>
<svg class="a" style="left:1266px;top:78px;" width="8" height="5" viewBox="0 0 8 5"><path d="M0 0L3.5 2.5L0 5ZM4 0L7.5 2.5L4 5Z" fill="#c0c0c0"/></svg>
<div class="a" style="left:1137px;top:87px;width:148px;height:109px;background:#2e2e2e"></div>
<div class="a" style="left:1137px;top:87px;width:99px;height:96px;background:#545454;border-top:1px solid #606060"></div>
<svg class="a" style="left:1177px;top:90px;" width="20" height="5" viewBox="0 0 20 5"><rect x="0" y="0" width="1" height="5" fill="#2e2e2e"/><rect x="2" y="0" width="1" height="5" fill="#2e2e2e"/><rect x="4" y="0" width="1" height="5" fill="#2e2e2e"/><rect x="6" y="0" width="1" height="5" fill="#2e2e2e"/><rect x="8" y="0" width="1" height="5" fill="#2e2e2e"/><rect x="10" y="0" width="1" height="5" fill="#2e2e2e"/><rect x="12" y="0" width="1" height="5" fill="#2e2e2e"/><rect x="14" y="0" width="1" height="5" fill="#2e2e2e"/><rect x="16" y="0" width="1" height="5" fill="#2e2e2e"/><rect x="18" y="0" width="1" height="5" fill="#2e2e2e"/></svg>
<div class="t" style="left:1149px;top:102px;font-size:17px;font-weight:bold;color:#cfcfcf">A</div>
<div class="a" style="left:1162px;top:102px;width:1px;height:17px;background:#cfcfcf"></div>
<div class="t" style="left:1174px;top:107px;font-size:10px;font-weight:bold;color:#e8e8e8;letter-spacing:-0.35px">Character</div>
<svg class="a" style="left:1150px;top:131px;" width="14" height="18" viewBox="0 0 14 18"><path d="M8 1H13V17M10 1V17" stroke="#cfcfcf" stroke-width="1.8" fill="none"/><path d="M9 1H6Q2 1 2 5Q2 9 6 9H9Z" fill="#cfcfcf"/></svg>
<div class="t" style="left:1174px;top:135px;font-size:10px;font-weight:bold;color:#e8e8e8;letter-spacing:-0.35px">Paragraph</div>
<svg class="a" style="left:1150px;top:159px;" width="16" height="18" viewBox="0 0 16 18"><rect x="0.5" y="0.5" width="4" height="4" fill="none" stroke="#cfcfcf"/><rect x="0.5" y="6.5" width="4" height="4" fill="none" stroke="#cfcfcf"/><rect x="0" y="12" width="5" height="5" fill="#cfcfcf"/><path d="M9 6Q13 6 12 12Q11 15 8 16" stroke="#cfcfcf" stroke-width="1.5" fill="none"/><path d="M7 3L10 1V6Z" fill="#cfcfcf"/></svg>
<div class="t" style="left:1174px;top:163px;font-size:10px;font-weight:bold;color:#e8e8e8;letter-spacing:-0.35px">History</div>
<div class="a" style="left:1239px;top:87px;width:37px;height:40px;background:#545454;border-top:1px solid #606060"></div>
<svg class="a" style="left:1248px;top:90px;" width="20" height="5" viewBox="0 0 20 5"><rect x="0" y="0" width="1" height="5" fill="#2e2e2e"/><rect x="2" y="0" width="1" height="5" fill="#2e2e2e"/><rect x="4" y="0" width="1" height="5" fill="#2e2e2e"/><rect x="6" y="0" width="1" height="5" fill="#2e2e2e"/><rect x="8" y="0" width="1" height="5" fill="#2e2e2e"/><rect x="10" y="0" width="1" height="5" fill="#2e2e2e"/><rect x="12" y="0" width="1" height="5" fill="#2e2e2e"/><rect x="14" y="0" width="1" height="5" fill="#2e2e2e"/><rect x="16" y="0" width="1" height="5" fill="#2e2e2e"/><rect x="18" y="0" width="1" height="5" fill="#2e2e2e"/></svg>
<svg class="a" style="left:1250px;top:101px;" width="17" height="16" viewBox="0 0 17 16"><path d="M5 1L9 3V7.5L5 9.5L1 7.5V3Z" fill="#cfcfcf"/><path d="M1 3L5 5L9 3M5 5V9.5" stroke="#777" stroke-width="0.7" fill="none"/><rect x="11" y="0.5" width="5" height="3.5" fill="#cfcfcf"/><rect x="11" y="5.5" width="5" height="3.5" fill="#cfcfcf"/><rect x="0" y="11.5" width="16" height="3.5" fill="#cfcfcf"/><path d="M11.5 12.5H14.5L13 14Z" fill="#333"/></svg>
<div class="a" style="left:1239px;top:129px;width:37px;height:67px;background:#545454;border-top:1px solid #606060"></div>
<svg class="a" style="left:1248px;top:132px;" width="20" height="5" viewBox="0 0 20 5"><rect x="0" y="0" width="1" height="5" fill="#2e2e2e"/><rect x="2" y="0" width="1" height="5" fill="#2e2e2e"/><rect x="4" y="0" width="1" height="5" fill="#2e2e2e"/><rect x="6" y="0" width="1" height="5" fill="#2e2e2e"/><rect x="8" y="0" width="1" height="5" fill="#2e2e2e"/><rect x="10" y="0" width="1" height="5" fill="#2e2e2e"/><rect x="12" y="0" width="1" height="5" fill="#2e2e2e"/><rect x="14" y="0" width="1" height="5" fill="#2e2e2e"/><rect x="16" y="0" width="1" height="5" fill="#2e2e2e"/><rect x="18" y="0" width="1" height="5" fill="#2e2e2e"/></svg>
<svg class="a" style="left:1249px;top:141px;" width="18" height="20" viewBox="0 0 18 20"><rect x="5" y="10" width="8" height="9" fill="#cfcfcf"/><path d="M9 10V3M6 10L3 4M12 10L15 4" stroke="#cfcfcf" stroke-width="1.3"/><circle cx="9" cy="2.5" r="2" fill="#cfcfcf"/><ellipse cx="3" cy="4" rx="2" ry="3" fill="#cfcfcf"/><ellipse cx="15" cy="4" rx="2" ry="3" fill="#cfcfcf"/></svg>
<svg class="a" style="left:1248px;top:172px;" width="19" height="17" viewBox="0 0 19 17"><path d="M0 1Q4 -0.5 8 2.5Q6 6 3 5Q1 4 0 1Z" fill="#cfcfcf"/><rect x="7" y="2" width="11" height="2.2" fill="#cfcfcf"/><rect x="1" y="10.5" width="11" height="2.2" fill="#cfcfcf"/><path d="M11 11.5L17 6Q19 11 17 16Z" fill="#cfcfcf"/></svg>
<div class="a" style="left:1279px;top:74px;width:225px;height:130px;background:#545454"></div>
<div class="a" style="left:1279px;top:74px;width:225px;height:13px;background:linear-gradient(#3c3c3c,#363636);border-top:1px solid #2a2a2a"></div>
<svg class="a" style="left:1473px;top:78px;" width="8" height="5" viewBox="0 0 8 5"><path d="M3.5 0L0 2.5L3.5 5ZM7.5 0L4 2.5L7.5 5Z" fill="#c8c8c8"/></svg>
<svg class="a" style="left:1490px;top:78px;" width="6" height="6" viewBox="0 0 6 6"><path d="M0.5 0.5L5.5 5.5M5.5 0.5L0.5 5.5" stroke="#d0d0d0" stroke-width="1.3"/></svg>
<div class="a" style="left:1279px;top:87px;width:225px;height:17px;background:#3c3c3c"></div>
<div class="a" style="left:1279px;top:87px;width:40px;height:17px;background:#545454;border-top:1px solid #606060"></div>
<div class="a" style="left:1319px;top:87px;width:1px;height:17px;background:#2e2e2e"></div>
<div class="a" style="left:1377px;top:87px;width:1px;height:17px;background:#2e2e2e"></div>
<div class="t" style="left:1286px;top:91px;font-size:10px;font-weight:bold;color:#e4e4e4;letter-spacing:-0.2px">Color</div>
<div class="t" style="left:1326px;top:91px;font-size:10px;font-weight:bold;color:#9c9c9c;letter-spacing:-0.4px">Swatches</div>
<svg class="a" style="left:1481px;top:92px;" width="14" height="8" viewBox="0 0 14 8"><path d="M0 2H5L2.5 5Z" fill="#dcdcdc"/><rect x="5" y="0" width="9" height="1" fill="#dcdcdc"/><rect x="5" y="2" width="9" height="1" fill="#dcdcdc"/><rect x="5" y="4" width="9" height="1" fill="#dcdcdc"/><rect x="5" y="6" width="9" height="1" fill="#dcdcdc"/></svg>
<div class="a" style="left:1294px;top:124px;width:20px;height:20px;background:#fff;border:1px solid #3a3a3a"></div>
<div class="a" style="left:1284px;top:113px;width:21px;height:21px;background:#1b1b1b;border:1px solid #fff;box-shadow:0 0 0 1px #3a3a3a"></div>
<div class="t" style="left:1322px;top:117px;font-size:10px;font-weight:bold;color:#e8e8e8">R</div>
<div class="a" style="left:1337px;top:113px;width:100px;height:6px;background:linear-gradient(90deg,#1b1b1b,#ff1b1b);border:1px solid #3a3a3a;box-shadow:0 0 0 1px #6a6a6a"></div>
<svg class="a" style="left:1341px;top:120px;" width="11" height="10" viewBox="0 0 11 10"><path d="M5.5 0L10.5 5V9.5H0.5V5Z" fill="#b8b8b8" stroke="#3a3a3a" stroke-width="0.8"/></svg>
<div class="a" style="left:1443px;top:112px;width:35px;height:18px;background:#3a3a3a;border:1px solid #333;box-shadow:0 1px 0 #5a5a5a"></div>
<div class="t" style="left:1448px;top:117px;font-size:10px;color:#f0f0f0">27</div>
<div class="t" style="left:1322px;top:141px;font-size:10px;font-weight:bold;color:#e8e8e8">G</div>
<div class="a" style="left:1337px;top:137px;width:100px;height:6px;background:linear-gradient(90deg,#1b1b1b,#1bff1b);border:1px solid #3a3a3a;box-shadow:0 0 0 1px #6a6a6a"></div>
<svg class="a" style="left:1341px;top:144px;" width="11" height="10" viewBox="0 0 11 10"><path d="M5.5 0L10.5 5V9.5H0.5V5Z" fill="#b8b8b8" stroke="#3a3a3a" stroke-width="0.8"/></svg>
<div class="a" style="left:1443px;top:136px;width:35px;height:18px;background:#3a3a3a;border:1px solid #333;box-shadow:0 1px 0 #5a5a5a"></div>
<div class="t" style="left:1448px;top:141px;font-size:10px;color:#f0f0f0">27</div>
<div class="t" style="left:1322px;top:165px;font-size:10px;font-weight:bold;color:#e8e8e8">B</div>
<div class="a" style="left:1337px;top:161px;width:100px;height:6px;background:linear-gradient(90deg,#1b1b1b,#1b1bff);border:1px solid #3a3a3a;box-shadow:0 0 0 1px #6a6a6a"></div>
<svg class="a" style="left:1341px;top:168px;" width="11" height="10" viewBox="0 0 11 10"><path d="M5.5 0L10.5 5V9.5H0.5V5Z" fill="#b8b8b8" stroke="#3a3a3a" stroke-width="0.8"/></svg>
<div class="a" style="left:1443px;top:160px;width:35px;height:18px;background:#3a3a3a;border:1px solid #333;box-shadow:0 1px 0 #5a5a5a"></div>
<div class="t" style="left:1448px;top:165px;font-size:10px;color:#f0f0f0">27</div>
<div class="a" style="left:1282px;top:185px;width:203px;height:17px;background:linear-gradient(90deg,#ff0000,#ffff00 16%,#00ff00 33%,#00ffff 50%,#0000ff 67%,#ff00ff 83%,#ff0000 96%);border:1px solid #333"></div>
<div class="a" style="left:1283px;top:186px;width:193px;height:15px;background:linear-gradient(rgba(255,255,255,.7),rgba(255,255,255,.15) 40%,rgba(0,0,0,.1) 60%,rgba(0,0,0,.85))"></div>
<div class="a" style="left:1476px;top:186px;width:8px;height:7px;background:#fff"></div>
<div class="a" style="left:1476px;top:193px;width:8px;height:8px;background:#000"></div>
<svg class="a" style="left:1488px;top:195px;" width="10" height="8" viewBox="0 0 10 8"><rect x="8" y="6" width="1" height="1" fill="#2a2a2a"/><rect x="10" y="4" width="1" height="1" fill="#2a2a2a"/><rect x="8" y="4" width="1" height="1" fill="#2a2a2a"/><rect x="12" y="2" width="1" height="1" fill="#2a2a2a"/><rect x="10" y="2" width="1" height="1" fill="#2a2a2a"/><rect x="8" y="2" width="1" height="1" fill="#2a2a2a"/><rect x="14" y="0" width="1" height="1" fill="#2a2a2a"/><rect x="12" y="0" width="1" height="1" fill="#2a2a2a"/><rect x="10" y="0" width="1" height="1" fill="#2a2a2a"/><rect x="8" y="0" width="1" height="1" fill="#2a2a2a"/></svg>
<div class="a" style="left:1285px;top:203px;width:207px;height:88px;background:#545454"></div>
<div class="a" style="left:1492px;top:203px;width:12px;height:88px;background:#2e2e2e"></div>
<div class="t" style="left:1294px;top:203px;font-size:10.5px;font-weight:bold;color:#f4f4f4;letter-spacing:-0.1px">Add an adjustment</div>
<svg class="a" style="left:1330px;top:220px;" width="18" height="16" viewBox="0 0 18 16"><circle cx="9" cy="8" r="4" fill="#d8d8d8"/><path d="M9 4A4 4 0 0 1 9 12Z" fill="#555"/><path d="M9 0V2M9 14V16M1 8H3M15 8H17M3 2L4.5 3.5M13.5 12.5L15 14M15 2L13.5 3.5M4.5 12.5L3 14" stroke="#d8d8d8" stroke-width="1.3"/></svg>
<svg class="a" style="left:1355px;top:220px;" width="18" height="16" viewBox="0 0 18 16"><path d="M0 13V9H1V6H2V9H3V4H4V8H5V3H6V7H7V2H8V6H9V1H10V6H11V3H12V7H13V2H14V8H15V5H16V9H17V13Z" fill="#d8d8d8"/><rect x="0" y="9.5" width="17" height="3.5" fill="#d8d8d8"/></svg>
<svg class="a" style="left:1379px;top:220px;" width="18" height="16" viewBox="0 0 18 16"><rect x="0.5" y="1.5" width="16" height="13" fill="#777" stroke="#d8d8d8"/><path d="M0.5 6H16.5M0.5 10H16.5M5 1.5V14.5M9 1.5V14.5M13 1.5V14.5" stroke="#d8d8d8" stroke-width="0.8"/><path d="M1 14Q8 14 9 8Q10 2 16 2" stroke="#e8e8e8" stroke-width="1.2" fill="none"/></svg>
<svg class="a" style="left:1403px;top:220px;" width="18" height="16" viewBox="0 0 18 16"><rect x="0.5" y="1.5" width="16" height="13" fill="#d8d8d8"/><path d="M0.5 14.5L16.5 1.5V14.5Z" fill="#888"/><path d="M2 5H6M4 3V7M10 11H14" stroke="#333" stroke-width="1.2"/></svg>
<svg class="a" style="left:1427px;top:220px;" width="18" height="16" viewBox="0 0 18 16"><path d="M1 1H17L9 15Z" fill="#d0d0d0"/><path d="M5 3H13L9 11Z" fill="#888" opacity=".6"/></svg>
<svg class="a" style="left:1319px;top:248px;" width="18" height="16" viewBox="0 0 18 16"><rect x="0.5" y="1.5" width="16" height="13" fill="#d8d8d8" stroke="#aaa"/><rect x="2" y="3" width="13" height="4" fill="#888"/><path d="M4 3V7M7 3V7M10 3V7M13 3V7" stroke="#ddd" stroke-width="1"/><rect x="2" y="8" width="13" height="5" fill="#999"/></svg>
<svg class="a" style="left:1343px;top:248px;" width="18" height="16" viewBox="0 0 18 16"><path d="M9 1V14M3 4H15M5 14H13" stroke="#d8d8d8" stroke-width="1.3"/><path d="M3 4L0 10H6Z M15 4L12 10H18Z" fill="none" stroke="#d8d8d8"/><path d="M0 10Q3 13 6 10Z M12 10Q15 13 18 10Z" fill="#d8d8d8"/><path d="M6 1H12L9 4Z" fill="#d8d8d8"/></svg>
<svg class="a" style="left:1367px;top:248px;" width="18" height="16" viewBox="0 0 18 16"><rect x="0.5" y="1.5" width="16" height="13" fill="#d8d8d8" stroke="#aaa"/><rect x="1" y="2" width="7.5" height="12" fill="#444"/></svg>
<svg class="a" style="left:1391px;top:248px;" width="18" height="16" viewBox="0 0 18 16"><rect x="0" y="2" width="12" height="9" fill="#d0d0d0"/><rect x="2" y="0.5" width="4" height="2" fill="#d0d0d0"/><circle cx="6" cy="6.5" r="3" fill="#666"/><circle cx="12" cy="10" r="5.3" fill="#999" stroke="#d8d8d8" stroke-width="1.2"/></svg>
<svg class="a" style="left:1415px;top:248px;" width="18" height="16" viewBox="0 0 18 16"><circle cx="9" cy="5" r="4.5" fill="#d8d8d8"/><circle cx="5.5" cy="10.5" r="4.5" fill="#d8d8d8"/><circle cx="12.5" cy="10.5" r="4.5" fill="#d8d8d8"/><path d="M7 8H11L9 11Z" fill="#555"/></svg>
<svg class="a" style="left:1439px;top:248px;" width="18" height="16" viewBox="0 0 18 16"><rect x="0.5" y="1.5" width="16" height="13" fill="#d8d8d8"/><path d="M0.5 6H16.5M0.5 10H16.5M5 1.5V14.5M9 1.5V14.5M13 1.5V14.5" stroke="#555" stroke-width="1"/></svg>
<svg class="a" style="left:1331px;top:275px;" width="18" height="16" viewBox="0 0 18 16"><rect x="0.5" y="1.5" width="16" height="13" fill="#d8d8d8" stroke="#aaa"/><path d="M2 14L16 2" stroke="#333" stroke-width="1"/><ellipse cx="8" cy="8" rx="4" ry="4.5" fill="#333"/></svg>
<svg class="a" style="left:1355px;top:275px;" width="18" height="16" viewBox="0 0 18 16"><rect x="0.5" y="1.5" width="16" height="13" fill="#888"/><path d="M1 12L12 2M4 14L15 4M8 14L16 7" stroke="#e0e0e0" stroke-width="2"/></svg>
<svg class="a" style="left:1379px;top:275px;" width="18" height="16" viewBox="0 0 18 16"><rect x="0.5" y="1.5" width="16" height="13" fill="#d8d8d8"/><path d="M1 9H5L7 6H11L13 3H16V6H14L12 9H8L6 12H1Z" fill="#333"/></svg>
<svg class="a" style="left:1403px;top:275px;" width="18" height="16" viewBox="0 0 18 16"><rect x="0.5" y="1.5" width="16" height="13" fill="#aaa" stroke="#d8d8d8"/><path d="M1 2L16 14M16 2L1 14" stroke="#444" stroke-width="1"/><path d="M1 2L8.5 8L1 14Z" fill="#d8d8d8"/></svg>
<svg class="a" style="left:1427px;top:275px;" width="18" height="16" viewBox="0 0 18 16"><rect x="0.5" y="1.5" width="16" height="13" fill="url(#gr1)" stroke="#d8d8d8"/><defs><linearGradient id="gr1"><stop offset="0" stop-color="#444"/><stop offset="1" stop-color="#e0e0e0"/></linearGradient></defs></svg>
<div class="a" style="left:1285px;top:291px;width:219px;height:449px;background:#474747"></div>
<div class="a" style="left:1285px;top:291px;width:219px;height:14px;background:linear-gradient(#3c3c3c,#363636);border-top:1px solid #2a2a2a"></div>
<svg class="a" style="left:1479px;top:295px;" width="8" height="5" viewBox="0 0 8 5"><path d="M3.5 0L0 2.5L3.5 5ZM7.5 0L4 2.5L7.5 5Z" fill="#c8c8c8"/></svg>
<svg class="a" style="left:1496px;top:295px;" width="6" height="6" viewBox="0 0 6 6"><path d="M0.5 0.5L5.5 5.5M5.5 0.5L0.5 5.5" stroke="#d0d0d0" stroke-width="1.3"/></svg>
<div class="a" style="left:1285px;top:305px;width:219px;height:17px;background:#3c3c3c"></div>
<div class="a" style="left:1285px;top:305px;width:43px;height:17px;background:#545454;border-top:1px solid #606060"></div>
<div class="a" style="left:1328px;top:305px;width:1px;height:17px;background:#2e2e2e"></div>
<div class="a" style="left:1385px;top:305px;width:1px;height:17px;background:#2e2e2e"></div>
<div class="a" style="left:1426px;top:305px;width:1px;height:17px;background:#2e2e2e"></div>
<div class="t" style="left:1292px;top:309px;font-size:10px;font-weight:bold;color:#e4e4e4;letter-spacing:-0.2px">Layers</div>
<div class="t" style="left:1335px;top:309px;font-size:10px;font-weight:bold;color:#9c9c9c;letter-spacing:-0.3px">Channels</div>
<div class="t" style="left:1393px;top:309px;font-size:10px;font-weight:bold;color:#9c9c9c;letter-spacing:-0.2px">Paths</div>
<svg class="a" style="left:1489px;top:310px;" width="14" height="8" viewBox="0 0 14 8"><path d="M0 2H5L2.5 5Z" fill="#dcdcdc"/><rect x="5" y="0" width="9" height="1" fill="#dcdcdc"/><rect x="5" y="2" width="9" height="1" fill="#dcdcdc"/><rect x="5" y="4" width="9" height="1" fill="#dcdcdc"/><rect x="5" y="6" width="9" height="1" fill="#dcdcdc"/></svg>
<div class="a" style="left:1285px;top:322px;width:219px;height:86px;background:#545454"></div>
<div class="a" style="left:1290px;top:327px;width:69px;height:19px;background:linear-gradient(#676767,#545454);border:1px solid #2e2e2e;border-radius:3px;box-shadow:inset 0 1px 0 #777"></div>
<svg class="a" style="left:1296px;top:330px;" width="12" height="12" viewBox="0 0 12 12"><circle cx="7" cy="5" r="3.8" fill="none" stroke="#e0e0e0" stroke-width="1.4"/><path d="M4.5 7.5L1 11" stroke="#e0e0e0" stroke-width="1.8"/></svg>
<div class="t" style="left:1311px;top:331px;font-size:10.5px;color:#f0f0f0">Kind</div>
<svg class="a" style="left:1348px;top:331px;" width="6" height="11" viewBox="0 0 6 11"><path d="M0 4L3 0L6 4ZM0 7L3 11L6 7Z" fill="#e8e8e8"/></svg>
<svg class="a" style="left:1371px;top:329px;" width="14" height="13" viewBox="0 0 14 13"><rect x="0.5" y="0.5" width="13" height="12" fill="#555" stroke="#d8d8d8"/><path d="M2 11L5 6L8 9L10 7L12 11Z" fill="#d8d8d8"/><path d="M9 3H12M10.5 1.5V4.5" stroke="#d8d8d8"/></svg>
<svg class="a" style="left:1395px;top:329px;" width="12" height="12" viewBox="0 0 12 12"><circle cx="6" cy="6" r="5.5" fill="#d0d0d0"/><path d="M9.5 2.5L2.5 9.5A5 5 0 0 0 9.5 2.5Z" fill="#777"/></svg>
<div class="t" style="left:1418px;top:327px;font-family:'Liberation Serif',serif;font-size:17px;font-weight:bold;color:#d8d8d8">T</div>
<svg class="a" style="left:1443px;top:329px;" width="13" height="13" viewBox="0 0 13 13"><rect x="2" y="2" width="9" height="9" fill="none" stroke="#d8d8d8" stroke-width="1.1"/><rect x="0.5" y="0.5" width="3" height="3" fill="#555" stroke="#d8d8d8" stroke-width="0.8"/><rect x="9.5" y="0.5" width="3" height="3" fill="#555" stroke="#d8d8d8" stroke-width="0.8"/><rect x="0.5" y="9.5" width="3" height="3" fill="#555" stroke="#d8d8d8" stroke-width="0.8"/><rect x="9.5" y="9.5" width="3" height="3" fill="#555" stroke="#d8d8d8" stroke-width="0.8"/></svg>
<svg class="a" style="left:1467px;top:329px;" width="12" height="14" viewBox="0 0 12 14"><path d="M3 0.5H8L11.5 4V13H3Z" fill="none" stroke="#d8d8d8"/><rect x="0" y="7" width="6" height="7" fill="#d8d8d8"/></svg>
<div class="a" style="left:1493px;top:328px;width:11px;height:18px;background:linear-gradient(#7a7a7a,#5a5a5a 50%,#3a3a3a 50%,#3a3a3a);border:1px solid #333"></div>
<div class="a" style="left:1285px;top:349px;width:219px;height:1px;background:#3a3a3a;box-shadow:0 1px 0 #5e5e5e"></div>
<div class="a" style="left:1289px;top:354px;width:111px;height:19px;background:linear-gradient(#676767,#545454);border:1px solid #2e2e2e;border-radius:3px;box-shadow:inset 0 1px 0 #777"></div>
<div class="t" style="left:1297px;top:358px;font-size:10.5px;color:#f0f0f0">Normal</div>
<svg class="a" style="left:1389px;top:358px;" width="6" height="11" viewBox="0 0 6 11"><path d="M0 4L3 0L6 4ZM0 7L3 11L6 7Z" fill="#e8e8e8"/></svg>
<div class="t" style="left:1407px;top:358px;font-size:10px;color:#f0f0f0">Opacity:</div>
<div class="a" style="left:1449px;top:355px;width:53px;height:18px;background:#333;border:1px solid #2c2c2c;border-radius:2px;box-shadow:0 1px 0 #5e5e5e"></div>
<div class="a" style="left:1484px;top:356px;width:17px;height:16px;background:linear-gradient(#6e6e6e,#595959)"></div>
<svg class="a" style="left:1490px;top:363px;" width="6" height="3" viewBox="0 0 6 3"><path d="M0 0H6L3 3Z" fill="#e8e8e8"/></svg>
<div class="t" style="left:1453px;top:359px;font-size:10.5px;color:#f0f0f0">100%</div>
<div class="a" style="left:1285px;top:377px;width:219px;height:1px;background:#3a3a3a;box-shadow:0 1px 0 #5e5e5e"></div>
<div class="t" style="left:1291px;top:387px;font-size:10px;color:#f0f0f0">Lock:</div>
<svg class="a" style="left:1324px;top:387px;" width="11" height="11" viewBox="0 0 11 11"><rect width="11" height="11" fill="#6e6e6e"/><rect x="0" y="0" width="3.7" height="3.7" fill="#999"/><rect x="7.3" y="0" width="3.7" height="3.7" fill="#999"/><rect x="3.7" y="3.7" width="3.7" height="3.7" fill="#999"/><rect x="0" y="7.3" width="3.7" height="3.7" fill="#999"/><rect x="7.3" y="7.3" width="3.7" height="3.7" fill="#999"/></svg>
<svg class="a" style="left:1343px;top:384px;" width="17" height="15" viewBox="0 0 17 15"><path d="M16 1L8 9" stroke="#8a8a8a" stroke-width="1.8"/><path d="M8 8Q10 12 6 13.5Q3 14.5 0 14Q3 13 4 10.5Q5 8 8 8Z" fill="#8a8a8a"/></svg>
<svg class="a" style="left:1367px;top:384px;" width="14" height="14" viewBox="0 0 14 14"><path d="M7 1V13M1 7H13" stroke="#e0e0e0" stroke-width="1.3"/><path d="M4.5 3.5L7 1L9.5 3.5M4.5 10.5L7 13L9.5 10.5M3.5 4.5L1 7L3.5 9.5M10.5 4.5L13 7L10.5 9.5" stroke="#e0e0e0" stroke-width="1.2" fill="none"/></svg>
<svg class="a" style="left:1391px;top:384px;" width="11" height="15" viewBox="0 0 11 15"><path d="M2.5 7V4.5Q2.5 1 5.5 1Q8.5 1 8.5 4.5V7" stroke="#dcdcdc" stroke-width="1.5" fill="none"/><rect x="0.5" y="7" width="10" height="7.5" fill="#dcdcdc"/><rect x="5" y="9.5" width="1.2" height="3" fill="#555"/></svg>
<div class="t" style="left:1429px;top:386px;font-size:10px;color:#f0f0f0">Fill:</div>
<div class="a" style="left:1449px;top:383px;width:53px;height:18px;background:#333;border:1px solid #2c2c2c;border-radius:2px;box-shadow:0 1px 0 #5e5e5e"></div>
<div class="a" style="left:1484px;top:384px;width:17px;height:16px;background:linear-gradient(#6e6e6e,#595959)"></div>
<svg class="a" style="left:1490px;top:391px;" width="6" height="3" viewBox="0 0 6 3"><path d="M0 0H6L3 3Z" fill="#e8e8e8"/></svg>
<div class="t" style="left:1453px;top:387px;font-size:10.5px;color:#f0f0f0">100%</div>
<div class="a" style="left:1285px;top:407px;width:207px;height:111px;background:#545454"></div>
<div class="a" style="left:1316px;top:408px;width:176px;height:38px;background:#6c7c97"></div>
<div class="a" style="left:1285px;top:446px;width:207px;height:1px;background:#3a3a3a"></div>
<div class="a" style="left:1285px;top:486px;width:207px;height:1px;background:#3a3a3a"></div>
<div class="a" style="left:1285px;top:518px;width:207px;height:1px;background:#3a3a3a"></div>
<div class="a" style="left:1315px;top:408px;width:1px;height:110px;background:#3a3a3a"></div>
<svg class="a" style="left:1293px;top:423px;" width="14" height="10" viewBox="0 0 14 10"><path d="M0.5 5Q7 -1.5 13.5 5Q7 11.5 0.5 5Z" fill="#cfcfcf"/><circle cx="7" cy="5" r="2.6" fill="#484848"/><circle cx="7.6" cy="4.4" r="0.9" fill="#c8c8c8"/></svg>
<svg class="a" style="left:1293px;top:462px;" width="14" height="10" viewBox="0 0 14 10"><path d="M0.5 5Q7 -1.5 13.5 5Q7 11.5 0.5 5Z" fill="#cfcfcf"/><circle cx="7" cy="5" r="2.6" fill="#484848"/><circle cx="7.6" cy="4.4" r="0.9" fill="#c8c8c8"/></svg>
<svg class="a" style="left:1293px;top:498px;" width="14" height="10" viewBox="0 0 14 10"><path d="M0.5 5Q7 -1.5 13.5 5Q7 11.5 0.5 5Z" fill="#cfcfcf"/><circle cx="7" cy="5" r="2.6" fill="#484848"/><circle cx="7.6" cy="4.4" r="0.9" fill="#c8c8c8"/></svg>
<svg class="a" style="left:1319px;top:410px;" width="32" height="33" viewBox="0 0 32 33"><defs><clipPath id="cp1319410"><rect width="32" height="33"/></clipPath></defs><g clip-path="url(#cp1319410)"><rect x="0" y="0" width="32" height="33" fill="#fafafa"/><rect x="0" y="0" width="4" height="4" fill="#cfcfcf"/><rect x="8" y="0" width="4" height="4" fill="#cfcfcf"/><rect x="16" y="0" width="4" height="4" fill="#cfcfcf"/><rect x="24" y="0" width="4" height="4" fill="#cfcfcf"/><rect x="32" y="0" width="4" height="4" fill="#cfcfcf"/><rect x="4" y="4" width="4" height="4" fill="#cfcfcf"/><rect x="12" y="4" width="4" height="4" fill="#cfcfcf"/><rect x="20" y="4" width="4" height="4" fill="#cfcfcf"/><rect x="28" y="4" width="4" height="4" fill="#cfcfcf"/><rect x="0" y="8" width="4" height="4" fill="#cfcfcf"/><rect x="8" y="8" width="4" height="4" fill="#cfcfcf"/><rect x="16" y="8" width="4" height="4" fill="#cfcfcf"/><rect x="24" y="8" width="4" height="4" fill="#cfcfcf"/><rect x="32" y="8" width="4" height="4" fill="#cfcfcf"/><rect x="4" y="12" width="4" height="4" fill="#cfcfcf"/><rect x="12" y="12" width="4" height="4" fill="#cfcfcf"/><rect x="20" y="12" width="4" height="4" fill="#cfcfcf"/><rect x="28" y="12" width="4" height="4" fill="#cfcfcf"/><rect x="0" y="16" width="4" height="4" fill="#cfcfcf"/><rect x="8" y="16" width="4" height="4" fill="#cfcfcf"/><rect x="16" y="16" width="4" height="4" fill="#cfcfcf"/><rect x="24" y="16" width="4" height="4" fill="#cfcfcf"/><rect x="32" y="16" width="4" height="4" fill="#cfcfcf"/><rect x="4" y="20" width="4" height="4" fill="#cfcfcf"/><rect x="12" y="20" width="4" height="4" fill="#cfcfcf"/><rect x="20" y="20" width="4" height="4" fill="#cfcfcf"/><rect x="28" y="20" width="4" height="4" fill="#cfcfcf"/><rect x="0" y="24" width="4" height="4" fill="#cfcfcf"/><rect x="8" y="24" width="4" height="4" fill="#cfcfcf"/><rect x="16" y="24" width="4" height="4" fill="#cfcfcf"/><rect x="24" y="24" width="4" height="4" fill="#cfcfcf"/><rect x="32" y="24" width="4" height="4" fill="#cfcfcf"/><rect x="4" y="28" width="4" height="4" fill="#cfcfcf"/><rect x="12" y="28" width="4" height="4" fill="#cfcfcf"/><rect x="20" y="28" width="4" height="4" fill="#cfcfcf"/><rect x="28" y="28" width="4" height="4" fill="#cfcfcf"/><rect x="0" y="32" width="4" height="4" fill="#cfcfcf"/><rect x="8" y="32" width="4" height="4" fill="#cfcfcf"/><rect x="16" y="32" width="4" height="4" fill="#cfcfcf"/><rect x="24" y="32" width="4" height="4" fill="#cfcfcf"/><rect x="32" y="32" width="4" height="4" fill="#cfcfcf"/><rect x="18" y="19" width="14" height="14" fill="#6c7c97"/></g><path d="M1 1H31V19H18V32H1Z" fill="none" stroke="#111" stroke-width="1.5"/></svg>
<svg class="a" style="left:1338px;top:430px;" width="12" height="12" viewBox="0 0 12 12"><rect x="2" y="2" width="8" height="8" fill="none" stroke="#e0e0e0" stroke-width="1"/><circle cx="2" cy="2" r="1.5" fill="#6c7c97" stroke="#e0e0e0" stroke-width="0.8"/><circle cx="10" cy="2" r="1.5" fill="#6c7c97" stroke="#e0e0e0" stroke-width="0.8"/><circle cx="2" cy="10" r="1.5" fill="#6c7c97" stroke="#e0e0e0" stroke-width="0.8"/><circle cx="10" cy="10" r="1.5" fill="#6c7c97" stroke="#e0e0e0" stroke-width="0.8"/></svg>
<svg class="a" style="left:1317px;top:409px;" width="36" height="36" viewBox="0 0 36 36"><path d="M0.5 8V0.5H8M28 0.5H35.5V8M35.5 28V35.5H28M8 35.5H0.5V28" stroke="#f0f0f0" stroke-width="1" fill="none"/></svg>
<svg class="a" style="left:1319px;top:449px;" width="32" height="33" viewBox="0 0 32 33"><defs><clipPath id="cp1319449"><rect width="32" height="33"/></clipPath></defs><g clip-path="url(#cp1319449)"><rect x="0" y="0" width="32" height="33" fill="#fafafa"/><rect x="0" y="0" width="4" height="4" fill="#cfcfcf"/><rect x="8" y="0" width="4" height="4" fill="#cfcfcf"/><rect x="16" y="0" width="4" height="4" fill="#cfcfcf"/><rect x="24" y="0" width="4" height="4" fill="#cfcfcf"/><rect x="32" y="0" width="4" height="4" fill="#cfcfcf"/><rect x="4" y="4" width="4" height="4" fill="#cfcfcf"/><rect x="12" y="4" width="4" height="4" fill="#cfcfcf"/><rect x="20" y="4" width="4" height="4" fill="#cfcfcf"/><rect x="28" y="4" width="4" height="4" fill="#cfcfcf"/><rect x="0" y="8" width="4" height="4" fill="#cfcfcf"/><rect x="8" y="8" width="4" height="4" fill="#cfcfcf"/><rect x="16" y="8" width="4" height="4" fill="#cfcfcf"/><rect x="24" y="8" width="4" height="4" fill="#cfcfcf"/><rect x="32" y="8" width="4" height="4" fill="#cfcfcf"/><rect x="4" y="12" width="4" height="4" fill="#cfcfcf"/><rect x="12" y="12" width="4" height="4" fill="#cfcfcf"/><rect x="20" y="12" width="4" height="4" fill="#cfcfcf"/><rect x="28" y="12" width="4" height="4" fill="#cfcfcf"/><rect x="0" y="16" width="4" height="4" fill="#cfcfcf"/><rect x="8" y="16" width="4" height="4" fill="#cfcfcf"/><rect x="16" y="16" width="4" height="4" fill="#cfcfcf"/><rect x="24" y="16" width="4" height="4" fill="#cfcfcf"/><rect x="32" y="16" width="4" height="4" fill="#cfcfcf"/><rect x="4" y="20" width="4" height="4" fill="#cfcfcf"/><rect x="12" y="20" width="4" height="4" fill="#cfcfcf"/><rect x="20" y="20" width="4" height="4" fill="#cfcfcf"/><rect x="28" y="20" width="4" height="4" fill="#cfcfcf"/><rect x="0" y="24" width="4" height="4" fill="#cfcfcf"/><rect x="8" y="24" width="4" height="4" fill="#cfcfcf"/><rect x="16" y="24" width="4" height="4" fill="#cfcfcf"/><rect x="24" y="24" width="4" height="4" fill="#cfcfcf"/><rect x="32" y="24" width="4" height="4" fill="#cfcfcf"/><rect x="4" y="28" width="4" height="4" fill="#cfcfcf"/><rect x="12" y="28" width="4" height="4" fill="#cfcfcf"/><rect x="20" y="28" width="4" height="4" fill="#cfcfcf"/><rect x="28" y="28" width="4" height="4" fill="#cfcfcf"/><rect x="0" y="32" width="4" height="4" fill="#cfcfcf"/><rect x="8" y="32" width="4" height="4" fill="#cfcfcf"/><rect x="16" y="32" width="4" height="4" fill="#cfcfcf"/><rect x="24" y="32" width="4" height="4" fill="#cfcfcf"/><rect x="32" y="32" width="4" height="4" fill="#cfcfcf"/><rect x="18" y="19" width="14" height="14" fill="#545454"/></g><path d="M1 1H31V19H18V32H1Z" fill="none" stroke="#111" stroke-width="1.5"/></svg>
<svg class="a" style="left:1338px;top:469px;" width="12" height="12" viewBox="0 0 12 12"><rect x="2" y="2" width="8" height="8" fill="none" stroke="#e0e0e0" stroke-width="1"/><circle cx="2" cy="2" r="1.5" fill="#545454" stroke="#e0e0e0" stroke-width="0.8"/><circle cx="10" cy="2" r="1.5" fill="#545454" stroke="#e0e0e0" stroke-width="0.8"/><circle cx="2" cy="10" r="1.5" fill="#545454" stroke="#e0e0e0" stroke-width="0.8"/><circle cx="10" cy="10" r="1.5" fill="#545454" stroke="#e0e0e0" stroke-width="0.8"/></svg>
<div class="a" style="left:1319px;top:490px;width:32px;height:24px;background:#fff;border:1px solid #111"></div>
<div class="t" style="left:1360px;top:424px;font-size:10px;color:#f4f4f4">Ellipse 2</div>
<div class="t" style="left:1362px;top:463px;font-size:10px;color:#f4f4f4">Ellipse 1</div>
<div class="t" style="left:1361px;top:499px;font-size:10px;font-style:italic;color:#f0f0f0">Background</div>
<svg class="a" style="left:1465px;top:497px;" width="10" height="12" viewBox="0 0 10 12"><path d="M2 6V4Q2 1 5 1Q8 1 8 4V6" stroke="#d8d8d8" stroke-width="1.2" fill="none"/><rect x="0.6" y="6" width="8.8" height="5.5" fill="none" stroke="#d8d8d8" stroke-width="1.1"/><rect x="4.4" y="7.5" width="1.2" height="2" fill="#d8d8d8"/></svg>
<div class="a" style="left:1492px;top:407px;width:12px;height:306px;background:#3a3a3a"></div>
<div class="a" style="left:1285px;top:713px;width:219px;height:20px;background:#545454;border-top:1px solid #606060"></div>
<svg class="a" style="left:1302px;top:719px;" width="17" height="10" viewBox="0 0 17 10"><path d="M6 1H4Q1 1 1 5Q1 9 4 9H7M10 1H13Q16 1 16 5Q16 9 13 9H11M5 5H12" stroke="#a8a8a8" stroke-width="1.6" fill="none"/></svg>
<div class="t" style="left:1332px;top:715px;font-family:'Liberation Serif',serif;font-style:italic;font-size:15px;color:#c8c8c8">fx</div>
<svg class="a" style="left:1345px;top:727px;" width="4" height="3" viewBox="0 0 4 3"><path d="M0 0H4L2 2.5Z" fill="#e0e0e0"/></svg>
<svg class="a" style="left:1359px;top:718px;" width="14" height="11" viewBox="0 0 14 11"><rect width="14" height="11" fill="#d8d8d8"/><circle cx="7" cy="6" r="2.3" fill="#555"/></svg>
<svg class="a" style="left:1386px;top:718px;" width="12" height="12" viewBox="0 0 12 12"><circle cx="6" cy="6" r="5.5" fill="#d0d0d0"/><path d="M9.5 2.5L2.5 9.5A5 5 0 0 0 9.5 2.5Z" fill="#555"/></svg>
<svg class="a" style="left:1399px;top:727px;" width="4" height="3" viewBox="0 0 4 3"><path d="M0 0H4L2 2.5Z" fill="#e0e0e0"/></svg>
<svg class="a" style="left:1413px;top:718px;" width="13" height="11" viewBox="0 0 13 11"><path d="M0 0H5L6 1.5H13V11H0Z" fill="#d8d8d8"/><rect x="5" y="1.5" width="8" height="1" fill="#999"/></svg>
<svg class="a" style="left:1440px;top:718px;" width="11" height="11" viewBox="0 0 11 11"><path d="M0 0H11V11H4L0 7Z" fill="#d8d8d8"/><path d="M0 7H4V11Z" fill="#555"/></svg>
<svg class="a" style="left:1466px;top:717px;" width="13" height="14" viewBox="0 0 13 14"><rect x="0" y="2" width="13" height="1.5" fill="#d8d8d8"/><rect x="4.5" y="0" width="4" height="2" fill="#d8d8d8"/><path d="M1.5 4H11.5L10.5 13.5H2.5Z" fill="#d8d8d8"/><path d="M4.5 5.5V12M6.5 5.5V12M8.5 5.5V12" stroke="#666" stroke-width="0.9"/></svg>
<div class="a" style="left:1285px;top:733px;width:219px;height:8px;background:#545454;border-top:1px solid #363636"></div>
<svg class="a" style="left:1386px;top:734px;" width="20" height="5" viewBox="0 0 20 5"><rect x="0" y="0" width="1" height="5" fill="#2e2e2e"/><rect x="2" y="0" width="1" height="5" fill="#2e2e2e"/><rect x="4" y="0" width="1" height="5" fill="#2e2e2e"/><rect x="6" y="0" width="1" height="5" fill="#2e2e2e"/><rect x="8" y="0" width="1" height="5" fill="#2e2e2e"/><rect x="10" y="0" width="1" height="5" fill="#2e2e2e"/><rect x="12" y="0" width="1" height="5" fill="#2e2e2e"/><rect x="14" y="0" width="1" height="5" fill="#2e2e2e"/><rect x="16" y="0" width="1" height="5" fill="#2e2e2e"/><rect x="18" y="0" width="1" height="5" fill="#2e2e2e"/></svg>
<svg class="a" style="left:1496px;top:722px;" width="8" height="10" viewBox="0 0 8 10"><rect x="6" y="8" width="1.2" height="1.2" fill="#222"/><rect x="6" y="6" width="1.2" height="1.2" fill="#222"/><rect x="4" y="6" width="1.2" height="1.2" fill="#222"/><rect x="6" y="4" width="1.2" height="1.2" fill="#222"/><rect x="4" y="4" width="1.2" height="1.2" fill="#222"/><rect x="2" y="4" width="1.2" height="1.2" fill="#222"/><rect x="6" y="2" width="1.2" height="1.2" fill="#222"/><rect x="4" y="2" width="1.2" height="1.2" fill="#222"/><rect x="2" y="2" width="1.2" height="1.2" fill="#222"/><rect x="0" y="2" width="1.2" height="1.2" fill="#222"/></svg>
<div class="a" style="left:1285px;top:741px;width:148px;height:8px;background:linear-gradient(#3e3e3e,#444)"></div>
<div class="a" style="left:1417px;top:741px;width:16px;height:8px;background:#555"></div>
<div class="a" style="left:1433px;top:741px;width:4px;height:33px;background:#545454;border-right:1px solid #3a3a3a"></div>
</body></html>
